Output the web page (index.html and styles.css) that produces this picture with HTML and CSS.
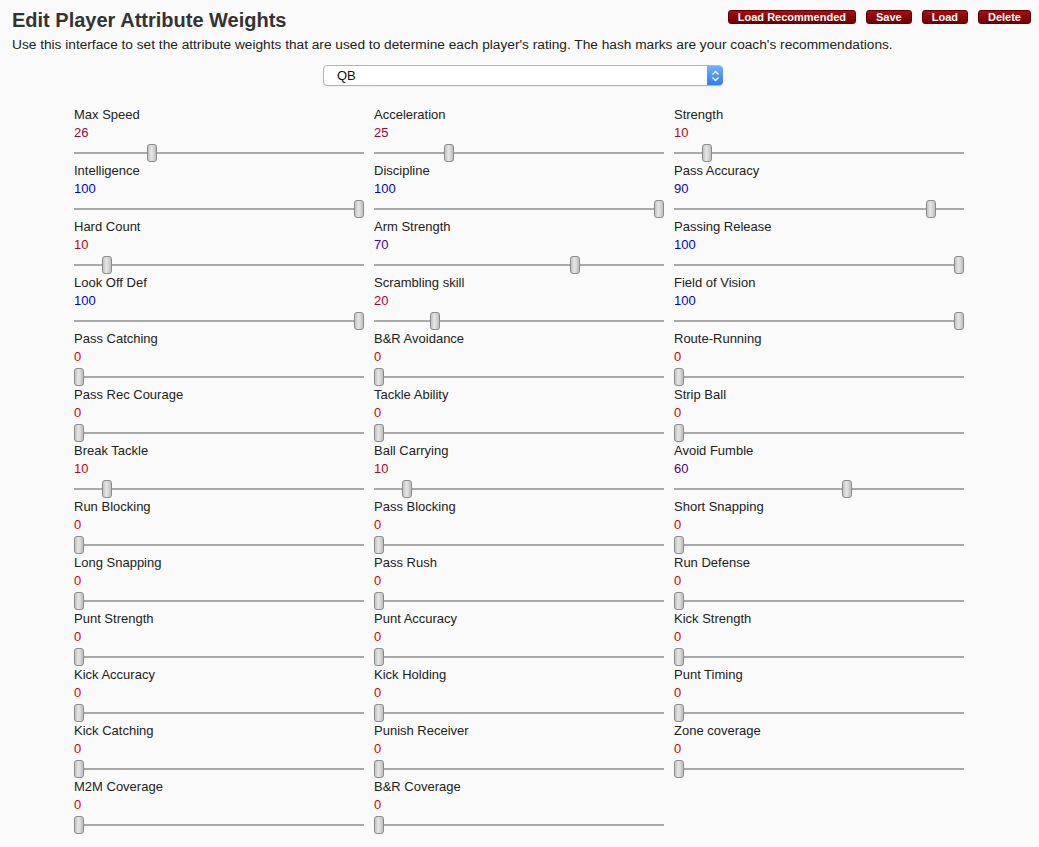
FILE: index.html
```html
<!DOCTYPE html>
<html>
<head>
<meta charset="utf-8">
<title>Edit Player Attribute Weights</title>
<link rel="stylesheet" href="styles.css">
</head>
<body>
<div class="page">
  <div class="header">
    <h1 class="title">Edit Player Attribute Weights</h1>
    <div class="actions">
      <button class="btn">Load Recommended</button>
      <button class="btn">Save</button>
      <button class="btn">Load</button>
      <button class="btn">Delete</button>
    </div>
  </div>
  <p class="intro">Use this interface to set the attribute weights that are used to determine each player's rating. The hash marks are your coach's recommendations.</p>
  <div class="select-row">
    <div class="select"><span class="select-text">QB</span><span class="select-arrow"><svg width="9" height="12" viewBox="0 0 9 12"><path d="M1.5 4.5 L4.5 1.5 L7.5 4.5 M1.5 7.5 L4.5 10.5 L7.5 7.5" fill="none" stroke="#fff" stroke-width="1.4"/></svg></span></div>
  </div>
  <div class="grid">
    <div class="attr" style="--v:0.26"><div class="name">Max Speed</div><div class="val">26</div><div class="slider"><div class="track"></div><div class="thumb"></div></div></div>
    <div class="attr" style="--v:0.25"><div class="name">Acceleration</div><div class="val">25</div><div class="slider"><div class="track"></div><div class="thumb"></div></div></div>
    <div class="attr" style="--v:0.10"><div class="name">Strength</div><div class="val">10</div><div class="slider"><div class="track"></div><div class="thumb"></div></div></div>

    <div class="attr" style="--v:1"><div class="name">Intelligence</div><div class="val">100</div><div class="slider"><div class="track"></div><div class="thumb"></div></div></div>
    <div class="attr" style="--v:1"><div class="name">Discipline</div><div class="val">100</div><div class="slider"><div class="track"></div><div class="thumb"></div></div></div>
    <div class="attr" style="--v:0.90"><div class="name">Pass Accuracy</div><div class="val">90</div><div class="slider"><div class="track"></div><div class="thumb"></div></div></div>

    <div class="attr" style="--v:0.10"><div class="name">Hard Count</div><div class="val">10</div><div class="slider"><div class="track"></div><div class="thumb"></div></div></div>
    <div class="attr" style="--v:0.70"><div class="name">Arm Strength</div><div class="val">70</div><div class="slider"><div class="track"></div><div class="thumb"></div></div></div>
    <div class="attr" style="--v:1"><div class="name">Passing Release</div><div class="val">100</div><div class="slider"><div class="track"></div><div class="thumb"></div></div></div>

    <div class="attr" style="--v:1"><div class="name">Look Off Def</div><div class="val">100</div><div class="slider"><div class="track"></div><div class="thumb"></div></div></div>
    <div class="attr" style="--v:0.20"><div class="name">Scrambling skill</div><div class="val">20</div><div class="slider"><div class="track"></div><div class="thumb"></div></div></div>
    <div class="attr" style="--v:1"><div class="name">Field of Vision</div><div class="val">100</div><div class="slider"><div class="track"></div><div class="thumb"></div></div></div>

    <div class="attr" style="--v:0"><div class="name">Pass Catching</div><div class="val">0</div><div class="slider"><div class="track"></div><div class="thumb"></div></div></div>
    <div class="attr" style="--v:0"><div class="name">B&amp;R Avoidance</div><div class="val">0</div><div class="slider"><div class="track"></div><div class="thumb"></div></div></div>
    <div class="attr" style="--v:0"><div class="name">Route-Running</div><div class="val">0</div><div class="slider"><div class="track"></div><div class="thumb"></div></div></div>

    <div class="attr" style="--v:0"><div class="name">Pass Rec Courage</div><div class="val">0</div><div class="slider"><div class="track"></div><div class="thumb"></div></div></div>
    <div class="attr" style="--v:0"><div class="name">Tackle Ability</div><div class="val">0</div><div class="slider"><div class="track"></div><div class="thumb"></div></div></div>
    <div class="attr" style="--v:0"><div class="name">Strip Ball</div><div class="val">0</div><div class="slider"><div class="track"></div><div class="thumb"></div></div></div>

    <div class="attr" style="--v:0.10"><div class="name">Break Tackle</div><div class="val">10</div><div class="slider"><div class="track"></div><div class="thumb"></div></div></div>
    <div class="attr" style="--v:0.10"><div class="name">Ball Carrying</div><div class="val">10</div><div class="slider"><div class="track"></div><div class="thumb"></div></div></div>
    <div class="attr" style="--v:0.60"><div class="name">Avoid Fumble</div><div class="val">60</div><div class="slider"><div class="track"></div><div class="thumb"></div></div></div>

    <div class="attr" style="--v:0"><div class="name">Run Blocking</div><div class="val">0</div><div class="slider"><div class="track"></div><div class="thumb"></div></div></div>
    <div class="attr" style="--v:0"><div class="name">Pass Blocking</div><div class="val">0</div><div class="slider"><div class="track"></div><div class="thumb"></div></div></div>
    <div class="attr" style="--v:0"><div class="name">Short Snapping</div><div class="val">0</div><div class="slider"><div class="track"></div><div class="thumb"></div></div></div>

    <div class="attr" style="--v:0"><div class="name">Long Snapping</div><div class="val">0</div><div class="slider"><div class="track"></div><div class="thumb"></div></div></div>
    <div class="attr" style="--v:0"><div class="name">Pass Rush</div><div class="val">0</div><div class="slider"><div class="track"></div><div class="thumb"></div></div></div>
    <div class="attr" style="--v:0"><div class="name">Run Defense</div><div class="val">0</div><div class="slider"><div class="track"></div><div class="thumb"></div></div></div>

    <div class="attr" style="--v:0"><div class="name">Punt Strength</div><div class="val">0</div><div class="slider"><div class="track"></div><div class="thumb"></div></div></div>
    <div class="attr" style="--v:0"><div class="name">Punt Accuracy</div><div class="val">0</div><div class="slider"><div class="track"></div><div class="thumb"></div></div></div>
    <div class="attr" style="--v:0"><div class="name">Kick Strength</div><div class="val">0</div><div class="slider"><div class="track"></div><div class="thumb"></div></div></div>

    <div class="attr" style="--v:0"><div class="name">Kick Accuracy</div><div class="val">0</div><div class="slider"><div class="track"></div><div class="thumb"></div></div></div>
    <div class="attr" style="--v:0"><div class="name">Kick Holding</div><div class="val">0</div><div class="slider"><div class="track"></div><div class="thumb"></div></div></div>
    <div class="attr" style="--v:0"><div class="name">Punt Timing</div><div class="val">0</div><div class="slider"><div class="track"></div><div class="thumb"></div></div></div>

    <div class="attr" style="--v:0"><div class="name">Kick Catching</div><div class="val">0</div><div class="slider"><div class="track"></div><div class="thumb"></div></div></div>
    <div class="attr" style="--v:0"><div class="name">Punish Receiver</div><div class="val">0</div><div class="slider"><div class="track"></div><div class="thumb"></div></div></div>
    <div class="attr" style="--v:0"><div class="name">Zone coverage</div><div class="val">0</div><div class="slider"><div class="track"></div><div class="thumb"></div></div></div>

    <div class="attr" style="--v:0"><div class="name">M2M Coverage</div><div class="val">0</div><div class="slider"><div class="track"></div><div class="thumb"></div></div></div>
    <div class="attr" style="--v:0"><div class="name">B&amp;R Coverage</div><div class="val">0</div><div class="slider"><div class="track"></div><div class="thumb"></div></div></div>
  </div>
</div>
</body>
</html>
```
FILE: styles.css
```css
html, body {
  margin: 0;
  padding: 0;
  background: #fafafa;
}
body {
  font-family: "Liberation Sans", Arial, Helvetica, sans-serif;
  color: #222;
  font-size: 13px;
}
.page {
  padding: 0 8px 0 12px;
}
.header {
  display: flex;
  justify-content: space-between;
  align-items: flex-start;
}
.title {
  margin: 0;
  padding-top: 9px;
  font-size: 20px;
  line-height: 22px;
  font-weight: bold;
  color: #333;
}
.actions {
  display: flex;
  gap: 10px;
  margin-top: 10px;
}
.btn {
  font-family: "Liberation Sans", Arial, Helvetica, sans-serif;
  font-size: 11px;
  font-weight: bold;
  color: #fff;
  height: 14px;
  line-height: 12px;
  padding: 0 9px;
  border: 1px solid #5a0000;
  border-radius: 3px;
  background: linear-gradient(#b00a0a, #6e0000);
  cursor: pointer;
}
.intro {
  margin: 6px 0 0 0;
  line-height: 16px;
  font-size: 13.7px;
  color: #222;
}
.select-row {
  display: flex;
  justify-content: center;
  margin-top: 12px;
  padding-left: 3px;
}
.select {
  width: 398px;
  height: 19px;
  border: 1px solid #b5b5b5;
  border-radius: 4px;
  background: #fff;
  display: flex;
  align-items: center;
  justify-content: space-between;
  box-shadow: 0 1px 1px rgba(0,0,0,0.05);
}
.select-text {
  padding-left: 13px;
  font-size: 13px;
  color: #111;
}
.select-arrow {
  width: 16px;
  height: 19px;
  border-radius: 0 4px 4px 0;
  background: linear-gradient(#72b0f7, #2e7ee8);
  display: flex;
  align-items: center;
  justify-content: center;
  margin-right: -1px;
}
.grid {
  display: grid;
  grid-template-columns: repeat(3, 300px);
  margin: 20px 0 0 62px;
}
.attr {
  display: flex;
  flex-direction: column;
}
.name {
  height: 18px;
  line-height: 18px;
  color: #222;
}
.val {
  height: 18px;
  line-height: 18px;
  color: rgb(calc(220 * (1 - var(--v))), 0, calc(220 * var(--v)));
}
.slider {
  position: relative;
  width: 290px;
  height: 20px;
}
.track {
  position: absolute;
  left: 0;
  right: 0;
  top: 10px;
  height: 2px;
  background: #a9a9a9;
}
.thumb {
  position: absolute;
  top: 2px;
  left: calc(var(--v) * (100% - 10px));
  width: 8px;
  height: 16px;
  border: 1px solid #8a8a8a;
  border-radius: 3px;
  background: linear-gradient(to right, #c4c4c4, #e6e6e6 45%, #bdbdbd);
}
```
